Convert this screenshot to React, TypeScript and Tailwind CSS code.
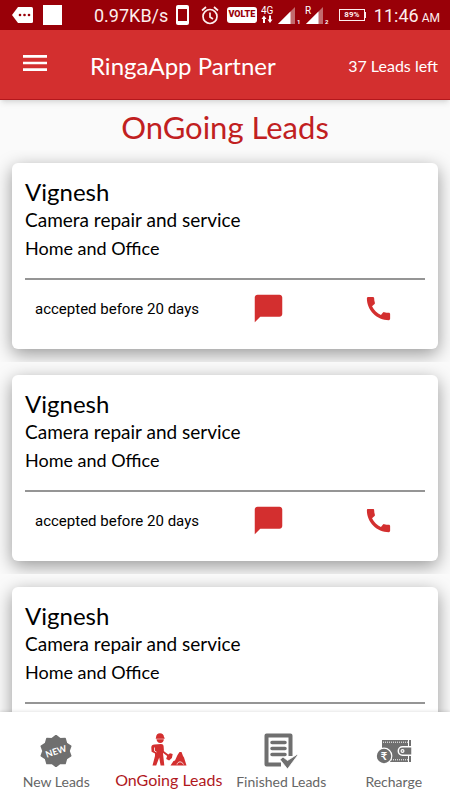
import { MdCall, MdChatBubble, MdMenu } from "react-icons/md";

// List of leads shown on the page
const leads = [
  {
    id: 1,
    name: "Vignesh",
    service: "Camera repair and service",
    place: "Home and Office",
    status: "accepted before 20 days",
  },
  {
    id: 2,
    name: "Vignesh",
    service: "Camera repair and service",
    place: "Home and Office",
    status: "accepted before 20 days",
  },
  {
    id: 3,
    name: "Vignesh",
    service: "Camera repair and service",
    place: "Home and Office",
    status: "accepted before 20 days",
  },
];

function StatusBar() {
  return (
    <div className="flex h-[30px] shrink-0 items-center bg-[#990008] pl-3 pr-[10px] font-[Roboto,sans-serif] text-[#fdeeee]">
      <svg width="21" height="16" viewBox="0 0 21 16" aria-hidden="true">
        <path
          d="M6 0h13.500a1.500 1.500 0 0 1 1.500 1.500v13a1.500 1.500 0 0 1-1.500 1.500H6L0 8z"
          fill="#fff"
        />
        <g fill="#990008">
          <circle cx="8" cy="8" r="1.300" />
          <circle cx="12.500" cy="8" r="1.300" />
          <circle cx="17" cy="8" r="1.300" />
        </g>
      </svg>
      <div className="ml-[10px] h-5 w-[19px] bg-white" />
      <span className="ml-8 text-[18px]">0.97KB/s</span>

      <div className="ml-auto flex items-center">
        <svg width="13" height="20" viewBox="0 0 13 20" aria-hidden="true">
          <rect width="13" height="20" rx="2" fill="#fff" />
          <rect x="2" y="4" width="9" height="12" fill="#990008" />
        </svg>
        <svg
          className="ml-3"
          width="18"
          height="19"
          viewBox="0 0 18 19"
          fill="none"
          stroke="#fdeeee"
          strokeWidth="1.700"
          aria-hidden="true"
        >
          <circle cx="9" cy="10.500" r="7" />
          <path d="M9 6.500v4.500l3 2M1 4.500L5 1M17 4.500L13 1" />
        </svg>
        <span className="ml-2 flex h-4 w-[30px] items-center justify-center rounded-[3px] bg-white text-[9px] font-black text-[#990008]">
          VOLTE
        </span>
        <svg
          className="ml-1"
          width="69"
          height="20"
          viewBox="0 0 69 20"
          fill="#fff"
          aria-hidden="true"
        >
          <text x="0" y="9" fontSize="10">
            4G
          </text>
          <path d="M3 10.500L.5 14H2v4h2v-4h1.500zM9 18l2.500-3.500H10v-4H8v4H6.500z" />
          <path d="M17 19L34 2v17z" fill="#c26a6d" />
          <path d="M17 19L29.500 6.500V19z" />
          <text x="36" y="19" fontSize="6" fontWeight="700">
            1
          </text>
          <path d="M45 19L62 2v17z" fill="#c26a6d" />
          <path d="M45 19L57.500 6.500V19z" />
          <text x="44" y="9" fontSize="10">
            R
          </text>
          <text x="64" y="19" fontSize="6" fontWeight="700">
            2
          </text>
        </svg>
        <span className="ml-[9px] flex h-3 w-[26px] items-center justify-center border border-[#fdeeee] text-[8px] font-bold">
          89%
        </span>
        <span className="h-1.5 w-px bg-[#fdeeee]" />
        <div className="ml-2 flex items-baseline gap-[3px]">
          <span className="text-[18px]">11:46</span>
          <span className="text-[12px]">AM</span>
        </div>
      </div>
    </div>
  );
}

function Header() {
  return (
    <header className="z-10 flex h-[70px] shrink-0 items-center border-b border-[#b3171c] bg-[#d32f2f] pl-[19px] pr-3 text-white shadow-md">
      <button type="button" aria-label="Open menu" className="pb-[3px]">
        <MdMenu size={32} />
      </button>
      <h1 className="ml-[39px] pt-0.5 text-[24px] leading-7">
        RingaApp Partner
      </h1>
      <span className="ml-auto pt-0.5 text-[16px] leading-5">
        37 Leads left
      </span>
    </header>
  );
}

function LeadCard({ lead }: { lead: (typeof leads)[number] }) {
  return (
    <li className="overflow-hidden px-3 pb-[13px] pt-[13px]">
      <article className="rounded-md bg-white px-[13px] pb-6 pt-[15px] text-black shadow-[0_5px_18px_rgba(0,0,0,0.4)]">
        <h3 className="text-[24px] leading-7">{lead.name}</h3>
        <p className="text-[19px] leading-7">{lead.service}</p>
        <p className="text-[18px] leading-7">{lead.place}</p>
        <div className="mt-4 grid grid-cols-[188px_110px_1fr] border-t-2 border-[#959595] pt-3">
          <p className="self-center pl-[10px] font-[Roboto,sans-serif] text-[15px] leading-5">
            {lead.status}
          </p>
          <button
            type="button"
            aria-label="Message"
            className="justify-self-center text-[#d32f2f]"
          >
            <MdChatBubble size={33} />
          </button>
          <button
            type="button"
            aria-label="Call"
            className="justify-self-center pl-2 text-[#d32f2f]"
          >
            <MdCall size={31} />
          </button>
        </div>
      </article>
    </li>
  );
}

function NewIcon() {
  // Ten rounded teeth around the badge
  const points = Array.from({ length: 20 }, (_, i) => {
    const r = i % 2 === 0 ? 15.5 : 13;
    const a = (i * Math.PI) / 10 - Math.PI / 2;
    return `${16 + r * Math.cos(a)},${16 + r * Math.sin(a)}`;
  }).join(" ");

  return (
    <svg width="32" height="32" viewBox="0 0 32 32" aria-hidden="true">
      <polygon
        points={points}
        fill="#6f6f6f"
        stroke="#6f6f6f"
        strokeWidth="1.500"
        strokeLinejoin="round"
      />
      <text
        x="16"
        y="19.500"
        textAnchor="middle"
        fontSize="9"
        fontWeight="700"
        fill="#fff"
        transform="rotate(-18 16 16)"
      >
        NEW
      </text>
    </svg>
  );
}

function WorkerIcon() {
  return (
    <svg width="36" height="33" viewBox="0 0 36 33" aria-hidden="true">
      <g fill="#d32f2f">
        {/* helmet and head */}
        <path d="M5 4.500C5 1.800 6.800.3 9 .3s4 1.500 4 4l.6.5v.9H4.700z" />
        <path d="M5.500 6.300h7.300c0 2.300-1.400 3.800-3.500 3.800S5.700 8.500 5.500 6.300z" />
        {/* body and legs */}
        <path d="M3.500 11.500l6.500-.5c1.600 0 2.400.8 2.600 2.200l.3 4-.9 3.300.3 2.500 1 9.500H9.600L8.200 24.500 5.200 32.500H1.500L4 23v-2.500L.6 18.800.3 14.500c0-1.800 1.200-3 3.200-3z" />
        {/* shovel */}
        <path d="M9 17.500l1-1.500 7.300 5.500 1.700-1.200 2.700.7-.8 4-2.800 2.500-2.900-1.500.9-3z" />
        {/* pile */}
        <path d="M19.500 32.500l3-4.500 1.500-.5 2.500-5.500 2-3h2l1.500 4 1 1.500 2.500 8z" />
      </g>
      <path
        d="M3.500 14.500v3.500l2 1M26 31.500c.8-3.500 5-3.500 6.500 0"
        fill="none"
        stroke="#fff"
        strokeWidth=".8"
      />
    </svg>
  );
}

function FinishedIcon() {
  return (
    <svg width="34" height="36" viewBox="0 0 34 36" aria-hidden="true">
      <path
        d="M17 31.500H2.500v-29h24V23"
        fill="none"
        stroke="#6f6f6f"
        strokeWidth="4"
        strokeLinejoin="round"
      />
      <path
        d="M8 9.500h13M8 15.500h13M8 21.500h13"
        stroke="#6f6f6f"
        strokeWidth="3.500"
        strokeLinecap="round"
      />
      <path
        d="M16 26.500l3-2.500 4.500 3.500L33 21.500l.5 1L23.500 36z"
        fill="#6f6f6f"
        stroke="#fff"
        strokeWidth=".8"
      />
    </svg>
  );
}

function RechargeIcon() {
  return (
    <svg width="36" height="25" viewBox="0 0 36 25" aria-hidden="true">
      <path d="M6 1h29v22H6z" fill="#6f6f6f" />
      <path
        d="M7 3.200h25M15 20.800h17"
        stroke="#fff"
        strokeWidth="1"
        strokeDasharray="1 1"
      />
      <path d="M32.500 1v22" stroke="#fff" strokeWidth="1" />
      <path
        d="M36 7.800h-9.500a4.200 4.200 0 0 0 0 8.400H36z"
        fill="#6f6f6f"
        stroke="#fff"
        strokeWidth="1.500"
      />
      <circle cx="26.500" cy="12" r="2" fill="#fff" />
      <circle cx="26.500" cy="12" r=".8" fill="#6f6f6f" />
      <circle
        cx="8"
        cy="17"
        r="7.800"
        fill="#6f6f6f"
        stroke="#fff"
        strokeWidth="1.200"
      />
      <text
        x="8"
        y="21"
        textAnchor="middle"
        fontSize="11"
        fontWeight="700"
        fill="#fff"
      >
        ₹
      </text>
    </svg>
  );
}

const tabs = [
  { label: "New Leads", icon: <NewIcon />, active: false },
  { label: "OnGoing Leads", icon: <WorkerIcon />, active: true },
  { label: "Finished Leads", icon: <FinishedIcon />, active: false },
  { label: "Recharge", icon: <RechargeIcon />, active: false },
];

function BottomNav() {
  return (
    <nav className="z-10 grid h-[88px] shrink-0 grid-cols-4 bg-white shadow-[0_-1px_3px_rgba(0,0,0,0.1)]">
      {tabs.map((tab) => (
        <button
          key={tab.label}
          type="button"
          aria-current={tab.active ? "page" : undefined}
          className={
            tab.active
              ? "flex flex-col items-center pt-[18px] text-[16px] leading-5 text-[#b0181d]"
              : "flex flex-col items-center pt-5 text-[14px] leading-5 text-[#666666]"
          }
        >
          <span className="flex h-[38px] items-center">{tab.icon}</span>
          <span className="mt-0.5 whitespace-nowrap">{tab.label}</span>
        </button>
      ))}
    </nav>
  );
}

export default function App() {
  return (
    <div className="flex h-screen flex-col bg-[#fafafa] font-[Lato,sans-serif]">
      <StatusBar />
      <Header />
      <main className="flex-1 overflow-y-auto [scrollbar-width:none]">
        <h2 className="pb-1 pt-2 text-center text-[31px] leading-[38px] text-[#c1201f]">
          OnGoing Leads
        </h2>
        <ul>
          {leads.map((lead) => (
            <LeadCard key={lead.id} lead={lead} />
          ))}
        </ul>
      </main>
      <BottomNav />
    </div>
  );
}
